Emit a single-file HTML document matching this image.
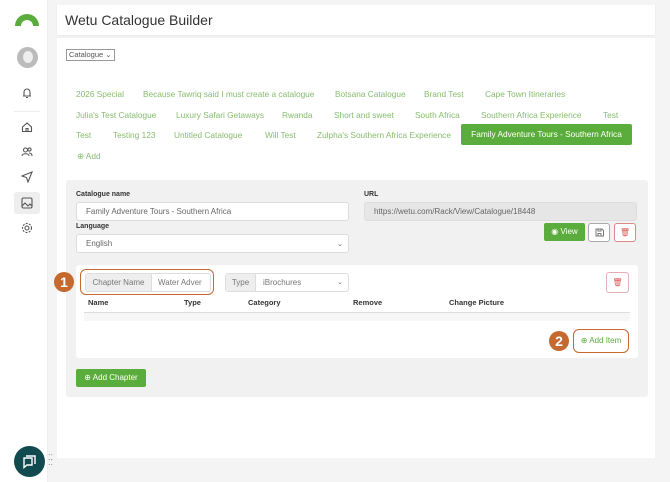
<!DOCTYPE html>
<html><head><style>
*{box-sizing:border-box;margin:0;padding:0}
body{width:670px;height:482px;overflow:hidden;background:#f4f4f4;font-family:"Liberation Sans",sans-serif;position:relative;color:#444}
.abs{position:absolute}
.side{left:0;top:0;width:48px;height:482px;background:#fff;border-right:1px solid #eee}
.tab{position:absolute;font-size:8.3px;color:#86bc6e;white-space:nowrap}
.lbl{position:absolute;font-size:7px;font-weight:bold;color:#333}
.inp{position:absolute;background:#fff;border:1px solid #ddd;border-radius:3px;font-size:8px;color:#666;padding-left:9px;display:flex;align-items:center}
.th{position:absolute;top:298px;font-size:7.5px;font-weight:bold;color:#333}
.badge{position:absolute;width:20px;height:20px;border-radius:50%;background:#c5692e;color:#fff;font-weight:bold;font-size:14px;display:flex;align-items:center;justify-content:center}
svg{display:block}
</style></head><body>
<div class="abs side"></div>
<svg class="abs" style="left:13px;top:11px" width="28" height="16"><path d="M2 15 A12 12 0 0 1 26 15 L20 15 A6 6 0 0 0 8 15 Z" fill="#5aad3c"/></svg>
<div class="abs" style="left:17px;top:47px;width:21px;height:21px;border-radius:50%;background:#bbb"><div style="margin:4px auto;width:10px;height:12px;border-radius:50%;background:#eee"></div></div>
<svg class="abs" style="left:21px;top:87px" width="12" height="12" fill="none" stroke="#555" stroke-width="1.1"><path d="M3 9V5a3 3 0 0 1 6 0v4H2h8M5 10.5h2"/></svg>
<div class="abs" style="left:14px;top:111px;width:26px;height:1px;background:#eee"></div>
<svg class="abs" style="left:21px;top:121px" width="12" height="12" fill="none" stroke="#555" stroke-width="1.1"><path d="M1.5 6L6 2l4.5 4v4.5h-9zM5 10.5V7.5h2v3"/></svg>
<svg class="abs" style="left:21px;top:146px" width="12" height="12" fill="none" stroke="#555" stroke-width="1.1"><circle cx="4.5" cy="4" r="2"/><circle cx="8.5" cy="3.5" r="1.6"/><path d="M1 10c0-3 7-3 7 0M8 7c2 0 3 1 3 3"/></svg>
<svg class="abs" style="left:21px;top:171px" width="12" height="12" fill="none" stroke="#555" stroke-width="1.1"><path d="M1 5l10-4-4 10-1.5-4.5z"/></svg>
<div class="abs" style="left:14px;top:192px;width:26px;height:22px;border-radius:3px;background:#eee"></div>
<svg class="abs" style="left:21px;top:197px" width="12" height="12" fill="none" stroke="#555" stroke-width="1.1"><rect x="1" y="1" width="10" height="10" rx="1.5"/><path d="M1 9l3-3 3 3 2-2 2 2"/></svg>
<svg class="abs" style="left:21px;top:222px" width="12" height="12" fill="none" stroke="#555" stroke-width="1.1"><circle cx="6" cy="6" r="2"/><circle cx="6" cy="6" r="4.5" stroke-dasharray="2 1.3"/></svg>

<div class="abs" style="left:57px;top:5px;width:598px;height:30px;background:#fff;box-shadow:0 1px 2px rgba(0,0,0,.05)"><div style="position:absolute;left:8px;top:7px;font-size:14px;color:#333">Wetu Catalogue Builder</div></div>
<div class="abs" style="left:57px;top:38px;width:598px;height:420px;background:#fff"></div>
<div class="abs" style="left:66px;top:49px;width:49px;height:12px;border:1px solid #999;font-size:7.5px;color:#555;padding-left:2px;line-height:10px">Catalogue ⌄</div>

<div class="tab" style="left:76px;top:89px">2026 Special</div>
<div class="tab" style="left:143px;top:89px">Because Tawriq said I must create a catalogue</div>
<div class="tab" style="left:335px;top:89px">Botsana Catalogue</div>
<div class="tab" style="left:424px;top:89px">Brand Test</div>
<div class="tab" style="left:485px;top:89px">Cape Town Itineraries</div>
<div class="tab" style="left:76px;top:110px">Julia's Test Catalogue</div>
<div class="tab" style="left:176px;top:110px">Luxury Safari Getaways</div>
<div class="tab" style="left:282px;top:110px">Rwanda</div>
<div class="tab" style="left:334px;top:110px">Short and sweet</div>
<div class="tab" style="left:415px;top:110px">South Africa</div>
<div class="tab" style="left:481px;top:110px">Southern Africa Experience</div>
<div class="tab" style="left:603px;top:110px">Test</div>
<div class="tab" style="left:76px;top:130px">Test</div>
<div class="tab" style="left:113px;top:130px">Testing 123</div>
<div class="tab" style="left:174px;top:130px">Untitled Catalogue</div>
<div class="tab" style="left:265px;top:130px">Will Test</div>
<div class="tab" style="left:317px;top:130px">Zulpha's Southern Africa Experience</div>
<div class="abs" style="left:461px;top:124px;width:171px;height:21px;background:#5aad3c;border-radius:2px;color:#fff;font-size:8.3px;text-align:center;line-height:21px">Family Adventure Tours - Southern Africa</div>
<div class="tab" style="left:77px;top:151px">⊕ Add</div>

<div class="abs" style="left:66px;top:180px;width:582px;height:217px;background:#f1f1f1;border-radius:3px"></div>
<div class="lbl" style="left:76px;top:191px">Catalogue name</div>
<div class="inp" style="left:76px;top:202px;width:273px;height:19px">Family Adventure Tours - Southern Africa</div>
<div class="lbl" style="left:76px;top:223px">Language</div>
<div class="inp" style="left:76px;top:234px;width:273px;height:19px">English<span style="position:absolute;right:5px;font-size:7px">⌄</span></div>
<div class="lbl" style="left:364px;top:191px">URL</div>
<div class="inp" style="left:364px;top:202px;width:273px;height:19px;background:#e6e6e6">https://wetu.com/Rack/View/Catalogue/18448</div>
<div class="abs" style="left:544px;top:223px;width:41px;height:18px;background:#5aad3c;border-radius:2px;color:#fff;font-size:8px;text-align:center;line-height:18px">◉ View</div>
<div class="abs" style="left:588px;top:223px;width:22px;height:19px;border:1px solid #aaa;border-radius:3px;background:#fff"><svg style="margin:4px auto" width="9" height="9" fill="none" stroke="#777" stroke-width="1"><path d="M1 1h6l1.5 1.5V8H1zM3 1v2h3V1M3 8V5.5h3V8"/></svg></div>
<div class="abs" style="left:614px;top:223px;width:22px;height:19px;border:1px solid #d88;border-radius:3px;background:#fff;font-size:8px;color:#d55;text-align:center;line-height:17px">🗑</div>

<div class="abs" style="left:76px;top:265px;width:562px;height:93px;background:#fff;border-radius:3px"></div>
<div class="abs" style="left:85px;top:273px;width:126px;height:19px;border:1px solid #ddd;border-radius:3px;background:#fff;font-size:8px;color:#777">
<div style="position:absolute;left:0;top:0;width:66px;height:17px;background:#eee;line-height:17px;text-align:center;border-right:1px solid #ddd">Chapter Name</div>
<div style="position:absolute;left:72px;line-height:17px">Water Adver</div></div>
<div class="abs" style="left:80px;top:269px;width:134px;height:26px;border:1.5px solid #c5692e;border-radius:6px"></div>
<div class="badge" style="left:54px;top:272px">1</div>
<div class="abs" style="left:225px;top:273px;width:124px;height:19px;border:1px solid #ddd;border-radius:3px;background:#fff;font-size:8px;color:#777">
<div style="position:absolute;left:0;top:0;width:30px;height:17px;background:#eee;line-height:17px;text-align:center;border-right:1px solid #ddd">Type</div>
<div style="position:absolute;left:37px;line-height:17px">iBrochures</div><span style="position:absolute;right:5px;line-height:17px;font-size:7px">⌄</span></div>
<div class="abs" style="left:606px;top:272px;width:23px;height:21px;border:1px solid #e0b0b8;border-radius:3px;font-size:8px;color:#d55;text-align:center;line-height:19px">🗑</div>
<div class="th" style="left:88px">Name</div>
<div class="th" style="left:184px">Type</div>
<div class="th" style="left:248px">Category</div>
<div class="th" style="left:353px">Remove</div>
<div class="th" style="left:449px">Change Picture</div>
<div class="abs" style="left:84px;top:312px;width:546px;height:1px;background:#ddd"></div>
<div class="abs" style="left:84px;top:313px;width:546px;height:8px;background:#f7f7f7"></div>
<div class="abs" style="left:573px;top:329px;width:56px;height:24px;border:1.5px solid #c5692e;border-radius:6px;font-size:8px;color:#5aad3c;text-align:center;line-height:21px">⊕ Add Item</div>
<div class="badge" style="left:549px;top:331px">2</div>
<div class="abs" style="left:76px;top:369px;width:70px;height:18px;background:#5aad3c;border-radius:2px;color:#fff;font-size:8px;text-align:center;line-height:18px">⊕ Add Chapter</div>

<div class="abs" style="left:14px;top:446px;width:31px;height:31px;border-radius:50%;background:#114b4f"></div>
<svg class="abs" style="left:22px;top:454px" width="15" height="15" fill="none" stroke="#fff" stroke-width="1.4"><path d="M4 2h9v8M2 4h8v7H5l-3 2.5z"/></svg>
<div class="abs" style="left:48px;top:455px;font-size:8px;color:#888;line-height:5px">⁚⁚<br>⁚⁚</div>
</body></html>
